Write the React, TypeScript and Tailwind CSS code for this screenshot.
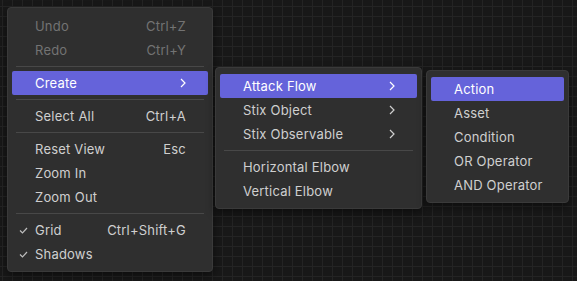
import React from 'react';

type Item =
    | { kind: 'item'; label: string; shortcut?: string; disabled?: boolean; active?: boolean; sub?: boolean; checked?: boolean }
    | { kind: 'sep' };

const mainMenu: Item[] = [
    { kind: 'item', label: 'Undo', shortcut: 'Ctrl+Z', disabled: true },
    { kind: 'item', label: 'Redo', shortcut: 'Ctrl+Y', disabled: true },
    { kind: 'sep' },
    { kind: 'item', label: 'Create', sub: true, active: true },
    { kind: 'sep' },
    { kind: 'item', label: 'Select All', shortcut: 'Ctrl+A' },
    { kind: 'sep' },
    { kind: 'item', label: 'Reset View', shortcut: 'Esc' },
    { kind: 'item', label: 'Zoom In' },
    { kind: 'item', label: 'Zoom Out' },
    { kind: 'sep' },
    { kind: 'item', label: 'Grid', shortcut: 'Ctrl+Shift+G', checked: true },
    { kind: 'item', label: 'Shadows', checked: true },
];

const createMenu: Item[] = [
    { kind: 'item', label: 'Attack Flow', sub: true, active: true },
    { kind: 'item', label: 'Stix Object', sub: true },
    { kind: 'item', label: 'Stix Observable', sub: true },
    { kind: 'sep' },
    { kind: 'item', label: 'Horizontal Elbow' },
    { kind: 'item', label: 'Vertical Elbow' },
];

const flowMenu: Item[] = [
    { kind: 'item', label: 'Action', active: true },
    { kind: 'item', label: 'Asset' },
    { kind: 'item', label: 'Condition' },
    { kind: 'item', label: 'OR Operator' },
    { kind: 'item', label: 'AND Operator' },
];

const Chevron = () => (
    <svg className="w-[6px] h-[10px]" viewBox="0 0 6 10" fill="none" stroke="currentColor" strokeWidth={1.2}>
        <path d="M1 1l4 4-4 4" />
    </svg>
);

const Check = () => (
    <svg className="w-[9px] h-[7px]" viewBox="0 0 9 7" fill="none" stroke="currentColor" strokeWidth={1.2}>
        <path d="M1 3.5l2.5 2.5L8 1" />
    </svg>
);

const Menu: React.FC<{ items: Item[]; className: string }> = ({ items, className }) => (
    <div className={`absolute flex flex-col bg-[#2f2f2f] border border-[#3a3a3a] rounded-[4px] px-1 pt-[6px] pb-[5px] shadow-[0_4px_10px_rgba(0,0,0,0.45)] ${className}`}>
        {items.map((it, i) => {
            if (it.kind === 'sep') {
                return <div key={i} className="h-px bg-[#484848] my-1 mx-1" />;
            }
            return (
                <div
                    key={i}
                    className={`relative flex items-center h-6 pl-[23px] pr-[22px] rounded-[2px] whitespace-nowrap ${
                        it.active ? 'bg-[#6563da] text-white' : it.disabled ? 'text-[#737373]' : 'text-[#cfcfcf]'
                    }`}
                >
                    {it.checked && (
                        <span className="absolute left-[7px] top-[9px] flex text-[#bdbdbd]">
                            <Check />
                        </span>
                    )}
                    <span className="flex-1">{it.label}</span>
                    {it.shortcut && <span>{it.shortcut}</span>}
                    {it.sub && (
                        <span className="flex">
                            <Chevron />
                        </span>
                    )}
                </div>
            );
        })}
    </div>
);

const App: React.FC = () => {
    return (
        <div
            className="relative w-[577px] h-[281px] overflow-hidden bg-[#181818] bg-[linear-gradient(to_right,#242424_1px,transparent_1px),linear-gradient(to_bottom,#242424_1px,transparent_1px)] bg-[size:10px_10px] bg-[position:2px_6px] text-[13px] tracking-[0.2px] leading-none"
            style={{ fontFamily: 'Inter, "Noto Sans", sans-serif' }}
        >
            {/* Main context menu */}
            <Menu items={mainMenu} className="left-[7px] top-[7px] w-[206px]" />
            {/* Create submenu */}
            <Menu items={createMenu} className="left-[215px] top-[67px] w-[207px]" />
            {/* Attack Flow submenu */}
            <Menu items={flowMenu} className="left-[426px] top-[70px] w-[143px]" />
        </div>
    );
};

export default App;
